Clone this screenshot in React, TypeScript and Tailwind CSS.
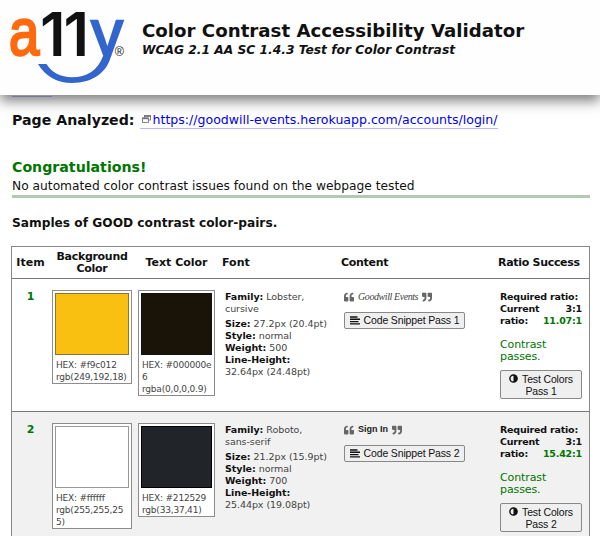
import React from "react";
import { FaQuoteLeft, FaQuoteRight } from "react-icons/fa";

type Sample = {
  id: number;
  bg: string;
  bgLines: string[];
  fg: string;
  fgLines: string[];
  family: [string, string];
  size: string;
  weight: string;
  lineHeight: string;
  content: React.ReactNode;
  ratio: string;
  rowClass: string;
};

const samples: Sample[] = [
  {
    id: 1,
    bg: "bg-[#f9c012] border-[#8a7430]",
    bgLines: ["HEX: #f9c012", "rgb(249,192,18)"],
    fg: "bg-[#1a1307] border-[#0b1518]",
    fgLines: ["HEX: #000000e", "6", "rgba(0,0,0,0.9)"],
    family: ["Lobster,", "cursive"],
    size: "27.2px (20.4pt)",
    weight: "500",
    lineHeight: "32.64px (24.48pt)",
    content: (
      <span className="font-['Liberation_Serif',serif] text-[10px] italic tracking-[-0.420px] text-[#444]">
        Goodwill Events
      </span>
    ),
    ratio: "11.07:1",
    rowClass: "bg-white",
  },
  {
    id: 2,
    bg: "bg-white border-[#999]",
    bgLines: ["HEX: #ffffff", "rgb(255,255,25", "5)"],
    fg: "bg-[#212529] border-black",
    fgLines: ["HEX: #212529", "rgb(33,37,41)"],
    family: ["Roboto,", "sans-serif"],
    size: "21.2px (15.9pt)",
    weight: "700",
    lineHeight: "25.44px (19.08pt)",
    content: (
      <span className="font-['Liberation_Sans',sans-serif] text-[9px] font-bold text-[#222]">Sign In</span>
    ),
    ratio: "15.42:1",
    rowClass: "bg-[#f1f1f1]",
  },
];

const columns = "grid grid-cols-[37px_86px_83px_119px_158px_94px]";

function Logo() {
  return (
    <svg width="130" height="95" viewBox="0 0 130 95" className="shrink-0" role="img" aria-label="a11y">
      <defs>
        <clipPath id="upper-y">
          <rect x="85" y="10" width="45" height="47" />
        </clipPath>
      </defs>
      <g fontFamily="Liberation Sans, sans-serif">
        <text transform="translate(9 55) scale(0.825 1)" fontSize="66" fill="#ff6a0f" stroke="#ff6a0f" strokeWidth="2.500">a</text>
        <text y="56" x="40 63.500" fontFamily="Inter, sans-serif" fontWeight="600" fontSize="60.500" fill="#111">11</text>
        <g clipPath="url(#upper-y)">
          <text transform="translate(91.300 56) scale(0.940 1)" fontSize="67" fill="#3366cc" stroke="#3366cc" strokeWidth="2.500">y</text>
        </g>
        <text x="114.800" y="56" fontSize="12.500" fill="#222">®</text>
      </g>
      <path d="M38 64H46.500C51 72 61 77.300 72 77.300C87 77.300 98 70 103 56L111.500 54C108 72 93 83 72 83C57 83 45 76 38 64Z" fill="#3366cc" />
    </svg>
  );
}

function AlignIcon() {
  return (
    <svg width="10" height="9" viewBox="0 0 10 9" className="shrink-0" fill="#111">
      <path d="M0 0.300h7.500v1.400H0zM0 2.600h10v1.400H0zM0 4.900h8.500v1.400H0zM0 7.200h10v1.400H0z" />
    </svg>
  );
}

function ContrastIcon() {
  return (
    <svg width="9" height="9" viewBox="0 0 9 9" className="shrink-0">
      <circle cx="4.500" cy="4.500" r="3.600" fill="none" stroke="#111" strokeWidth="1.500" />
      <path d="M4.500 0.800a3.700 3.700 0 0 1 0 7.400z" fill="#111" />
    </svg>
  );
}

function WindowsIcon() {
  return (
    <svg width="9" height="8" viewBox="0 0 9 8" className="mb-[2px] ml-[2px] shrink-0" fill="#fff" stroke="#777" strokeWidth="0.900">
      <rect x="2.500" y="0.500" width="6" height="4.500" />
      <path d="M2.500 1.200h6" strokeWidth="1.400" />
      <rect x="0.500" y="2.900" width="6" height="4.500" />
      <path d="M0.500 3.500h6" strokeWidth="1.400" />
    </svg>
  );
}

function Swatch({ color, lines, width }: { color: string; lines: string[]; width: string }) {
  return (
    <div className={`ml-[3px] border border-[#8c8c8c] bg-white p-[2px] pb-0 ${width}`}>
      <div className={`h-[62px] border ${color}`} />
      <div className="mt-[4px] pl-[1px] text-[9px] leading-[12px] tracking-[-0.200px] text-[#444]">
        {lines.map((line) => (
          <div key={line} className="whitespace-nowrap">{line}</div>
        ))}
      </div>
    </div>
  );
}

function Field({ name, value }: { name: string; value?: string }) {
  return (
    <div>
      <b className="text-[#111]">{name}</b> {value}
    </div>
  );
}

function Row({ s }: { s: Sample }) {
  return (
    <div className={`h-[133px] items-start border-b border-[#777] pt-[11px] ${columns} ${s.rowClass}`}>
      <div className="text-center text-[11px] leading-[13px] font-bold text-[#007500]">{s.id}</div>
      <Swatch color={s.bg} lines={s.bgLines} width="w-[80px]" />
      <Swatch color={s.fg} lines={s.fgLines} width="w-[77px]" />
      <div className="pt-[1px] pl-[7px] text-[9.500px] leading-[12px] tracking-[-0.060px] whitespace-nowrap text-[#444]">
        <Field name="Family:" value={s.family[0]} />
        <div>{s.family[1]}</div>
        <div className="h-[3px]" />
        <Field name="Size:" value={s.size} />
        <Field name="Style:" value="normal" />
        <Field name="Weight:" value={s.weight} />
        <Field name="Line-Height:" />
        <div>{s.lineHeight}</div>
      </div>
      <div className="pl-[7px]">
        <div className="flex h-[13px] items-center gap-[4px]">
          <FaQuoteLeft size={10} color="#666" />
          {s.content}
          <FaQuoteRight size={10} color="#666" />
        </div>
        <button className="mt-[9px] flex h-[17px] w-[121px] items-center justify-center gap-[4px] rounded-[2px] border border-[#888] bg-[#efefef] font-['Liberation_Sans',sans-serif] text-[10.500px] tracking-[-0.150px] whitespace-nowrap text-[#111]">
          <AlignIcon />
          Code Snippet Pass {s.id}
        </button>
      </div>
      <div className="w-[87px] pt-[1px] pl-[5px] text-[9.500px] leading-[12px] font-bold tracking-[-0.200px] whitespace-nowrap text-[#111]">
        <div>Required ratio:</div>
        <div className="flex justify-between"><span>Current</span><span>3:1</span></div>
        <div className="flex justify-between"><span>ratio:</span><span className="text-[#007500]">{s.ratio}</span></div>
        <div className="mt-[12px] text-[11px] font-normal tracking-[-0.100px] text-[#007500]">
          <div>Contrast</div>
          <div>passes.</div>
        </div>
        <button className="mt-[7px] flex h-[29px] w-[82px] flex-col items-center justify-center rounded-[2px] border border-[#888] bg-[#efefef] font-['Liberation_Sans',sans-serif] text-[10.500px] leading-[12px] font-normal tracking-[-0.150px] text-[#111]">
          <span className="flex items-center gap-[4px]"><ContrastIcon />Test Colors</span>
          <span>Pass {s.id}</span>
        </button>
      </div>
    </div>
  );
}

export default function App() {
  return (
    <div className="h-[536px] w-[600px] overflow-hidden bg-white font-['DejaVu_Sans',sans-serif] text-[#111]">
      <header className="relative z-10 flex h-[95px] bg-[#fefefe] shadow-[0_6px_12px_0_rgba(0,0,0,0.500)]">
        <Logo />
        <div className="pt-[20px] pl-[12px] whitespace-nowrap">
          <h1 className="text-[18.200px] leading-[22px] font-bold">Color Contrast Accessibility Validator</h1>
          <p className="text-[12.250px] leading-[16px] font-bold italic">WCAG 2.1 AA SC 1.4.3 Test for Color Contrast</p>
        </div>
      </header>
      <main className="pr-[10px] pl-[12px] whitespace-nowrap">
        <div className="h-[2px] w-[40px] border-b border-[#c4c4ff]" />
        <div className="flex h-[32px] items-end">
          <h2 className="text-[14.170px] leading-[18px] font-bold">Page Analyzed:</h2>
          <a className="ml-[5px] flex items-center border-b border-[#b8b8ff] text-[12.550px] leading-[16px] text-[#0000ee]">
            <WindowsIcon />
            <span className="ml-[2px]">https://goodwill-events.herokuapp.com/accounts/login/</span>
          </a>
        </div>
        <h2 className="mt-[29px] text-[14.170px] leading-[18px] font-bold text-[#007500]">Congratulations!</h2>
        <p className="border-b-[3px] border-[#b3c9b3] pt-[3px] pb-[1px] text-[12.250px] leading-[15px]">No automated color contrast issues found on the webpage tested</p>
        <h3 className="mt-[17px] text-[12.200px] leading-[16px] font-bold">Samples of GOOD contrast color-pairs.</h3>
        <div className="mt-[15px] -ml-px w-[579px] border border-[#888]">
          <div className={`h-[32px] items-center border-b border-[#777] text-[11px] leading-[12px] font-bold ${columns}`}>
            <div className="text-center">Item</div>
            <div className="text-center tracking-[-0.300px]">Background<br />Color</div>
            <div className="text-center">Text Color</div>
            <div className="pl-[4px]">Font</div>
            <div className="pl-[4px] tracking-[-0.300px]">Content</div>
            <div className="pl-[3px] tracking-[-0.300px]">Ratio Success</div>
          </div>
          {samples.map((s) => <Row key={s.id} s={s} />)}
        </div>
      </main>
    </div>
  );
}
